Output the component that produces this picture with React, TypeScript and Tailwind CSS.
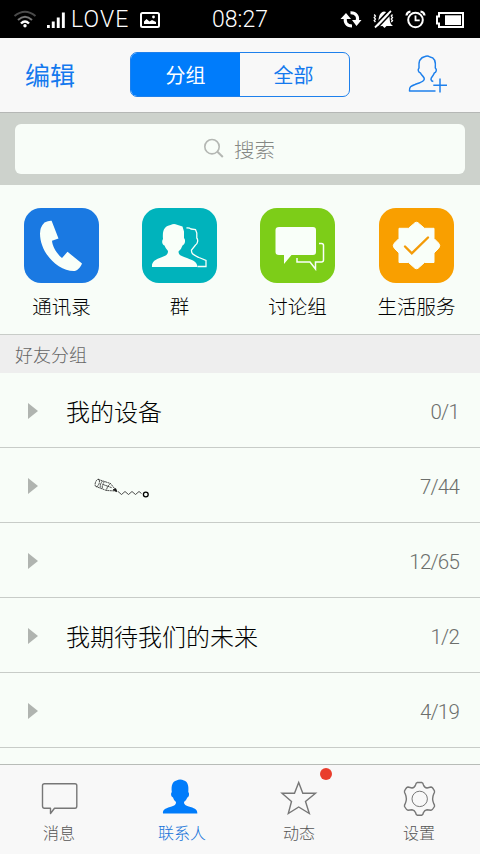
import React from "react";

type IconProps = { className?: string };

const cjk = "font-['Noto_Sans_CJK_SC',sans-serif]";
const latin = "font-['Roboto','Noto_Sans_CJK_SC',sans-serif]";

function StatusLeft() {
  return (
    <svg className="h-[38px] w-[66px]" viewBox="0 0 66 38" fill="none">
      <g strokeWidth="2">
        <path d="M14.500 16Q25 7.500 35.500 16" stroke="#4a4a4a" />
        <path d="M18 20Q25 13.500 32 20" stroke="#777" />
        <path d="M21 23.500Q25 19.500 29 23.500" stroke="#fff" strokeWidth="2.400" />
      </g>
      <circle cx="25" cy="25.700" r="1.700" fill="#fff" />
      <path d="M47 25h2.800v3H47zM51.800 21.500h2.900V28h-2.900zM56.800 17.500h2.900V28h-2.900zM61.900 12.500h2.900V28h-2.900z" fill="#fff" />
    </svg>
  );
}

function PictureIcon() {
  return (
    <svg className="h-[38px] w-[22px]" viewBox="139 0 22 38" fill="none">
      <rect x="141" y="13" width="18" height="14" rx="1.500" stroke="#fff" strokeWidth="2" />
      <path d="M144 24v-2.500l2.500-2.500 3 2.500 2.500-1.500 4 2V24z" fill="#fff" />
      <circle cx="153.500" cy="17" r="1.400" fill="#fff" />
    </svg>
  );
}

function StatusRight() {
  return (
    <svg className="h-[38px] w-[130px]" viewBox="338 0 130 38" fill="none">
      <g stroke="#fff" strokeWidth="3">
        <path d="M352 26C346.500 26 344 22 345.800 17" />
        <path d="M350.500 12.700C356 12.500 359 17 357 21.500" />
      </g>
      <path d="M340.500 19l5.500-6 5 6zM352 20h9.500l-5 6z" fill="#fff" />
      <path d="M375.500 26.500c3.500-3 2.500-6 3.500-9.500.8-3.500 2.500-5 5-5.500 3 .2 5 2 5.500 5.500.5 4 0 6.500 3.500 9h-6.500l-2 2-2-2z" fill="#fff" />
      <path d="M374 26.500l16-17" stroke="#000" strokeWidth="2" />
      <path d="M375 27.500L391 11" stroke="#fff" strokeWidth="1.800" />
      <path d="M377 28.500l16-17" stroke="#000" strokeWidth="1.500" />
      <path d="M374.200 14.500l1.200 1.500-1.200 1.500 1.200 1.500-1.200 1.500 1.200 1.500M392.500 14.500l-1.200 1.500 1.200 1.500-1.200 1.500 1.200 1.500-1.200 1.500" stroke="#fff" strokeWidth="1.300" />
      <circle cx="415.500" cy="20" r="7.300" stroke="#fff" strokeWidth="2" />
      <path d="M415.500 15.500v4.800h4.200" stroke="#fff" strokeWidth="1.800" />
      <path d="M406.500 15.500q.3-3.500 4-4M424.500 15.500q-.3-3.500-4-4" stroke="#fff" strokeWidth="2.200" />
      <path d="M439 13H463v14H439v-3.500h-2v-7h2z" stroke="#fff" strokeWidth="2" />
      <path d="M445 15.300h16v9.700h-16z" fill="#fff" />
    </svg>
  );
}

function AddContactIcon() {
  return (
    <svg className="h-10 w-10" viewBox="408 54 40 40" fill="none" stroke="#1e80ec" strokeWidth="1.500" strokeLinejoin="round">
      <path d="M435.500 91H409.500C409 87 411 86 415 84.500C421 82 424 82 424.300 79C424.400 76.500 421.500 75.800 420.500 73C418.300 72.500 417.500 69.500 419 68C418.300 61 420 57.500 425 56.500Q427.500 55.300 430 57C434.500 57.500 436 61 435.300 68C437.200 69.500 436.200 72.500 434.300 73C433.300 76.500 430.800 77 431 79.500Q431.300 81.200 433.300 81.500" />
      <path d="M440 78.500V92.500M433.300 85.300H447" />
    </svg>
  );
}

function SearchIcon() {
  return (
    <svg className="h-5 w-5" viewBox="204 138 20 20" fill="none" stroke="#b4b7b3" strokeWidth="1.600">
      <circle cx="212" cy="146.700" r="7.200" />
      <path d="M217.200 151.500L222.800 157" strokeWidth="2" />
    </svg>
  );
}

function PhoneArt() {
  return (
    <svg className="size-full" viewBox="24 208 75 75" fill="#f9fff9">
      <path d="M44.500 222.500Q48.500 220.500 51.600 220.800L58.500 238.500L52 240.800C52.500 247 57 254 62 258L67.500 251.800L82 263.500C80.500 267.500 77.500 270.500 74.500 271C58 271.500 40 253 40 233.500Q40 227 44.500 222.500Z" />
    </svg>
  );
}

function GroupArt() {
  return (
    <svg className="size-full" viewBox="142 208 75 75" fill="#f9fff9">
      <path d="M152 267C151.500 262 155 259.500 161 257.500C167 255.500 168 254 168 251Q165.500 248.500 164.500 245.500C162 244.500 161.500 241 163 239C162 229 165.500 226 170.500 225Q174 223.200 177 224.800L182.500 226.500L184 231.500V238C186 240 185 244.500 182.500 245.500Q181.500 249 178.500 251.500C178.500 255 181 256 187 258C193.500 260.500 197.500 262 197.300 267Z" />
      <path d="M186.500 228Q189 227.500 191 229L195.500 229.500L196.800 233V238C198.500 240 197.500 244 195.500 245L191.500 250C191 254 194 255 199 257.500L206 260.500V266.500H197.500" fill="none" stroke="#f9fff9" strokeWidth="1.300" />
    </svg>
  );
}

function ChatArt() {
  return (
    <svg className="size-full" viewBox="260 208 75 75" fill="#f9fff9">
      <path d="M279 227h34q3 0 3 3v22q0 3-3 3h-21.500l-7.500 9v-9H279q-3.500 0-3.500-3v-22q0-3 3.500-3z" />
      <path d="M319 243.500h2.500q2 0 2 2V260q0 2-2 2h-6v7l-5.500-7H297V258" fill="none" stroke="#f9fff9" strokeWidth="1.500" />
    </svg>
  );
}

function ServiceArt() {
  return (
    <svg className="size-full" viewBox="379 208 75 75" fill="none">
      <path d="M413.500 224Q416.500 220.500 419.500 224L424.500 228.300H434V238.500L438.500 243Q441 245.700 438.500 248.500L434 253V262.500H424.500L419.500 267Q416.500 270.500 413.500 267L408.500 262.500H399V253L394.500 248.500Q392 245.700 394.500 243L399 238.500V228.300H408.500Z" fill="#f9fff9" stroke="#f9fff9" strokeLinejoin="round" strokeWidth="1" />
      <path d="M405 246.500L411.800 253.300L428 237.500" stroke="#f39b08" strokeWidth="2.400" strokeLinecap="round" />
    </svg>
  );
}

function MessageIcon({ className }: IconProps) {
  return (
    <svg className={className} viewBox="40 777 40 40" fill="none" stroke="#777" strokeWidth="1.400" strokeLinejoin="round">
      <path d="M44.500 783.700H75Q76.800 783.700 76.800 785.500V806Q76.800 808.300 75 808.300H54.500L50.500 813.500V808.300H44.500Q42.500 808.300 42.500 806V785.500Q42.500 783.700 44.500 783.700Z" />
    </svg>
  );
}

function ContactsIcon({ className }: IconProps) {
  return (
    <svg className={className} viewBox="160 777 40 40" fill="#007cfb">
      <path d="M163 813.500C162.500 810 165 808.500 170 807C175 805.500 176 804.500 176 802Q173.500 800 173 797.500C170.800 796.500 170.500 793.500 171.800 792C171 785.500 172.500 781.500 176.500 780.500Q180 778.700 184 780.500C187.500 781.500 189 785.500 188.300 792C189.800 793.500 189 797 187.300 797.500Q186.300 800.500 184 802C184 804.500 185.500 805.500 190.500 807C195.500 808.500 197.500 810 197.300 813.500Z" />
    </svg>
  );
}

function StarIcon({ className }: IconProps) {
  return (
    <svg className={className} viewBox="280 777 40 40" fill="none" stroke="#777" strokeWidth="1.400">
      <path d="M298.700 782.500L302.800 793.300H315.500L305.500 801.500L309.300 813.500L298.700 807L288.300 813.500L291.500 801.500L282 793.300H294.500Z" />
    </svg>
  );
}

function GearIcon({ className }: IconProps) {
  return (
    <svg className={className} viewBox="400 777 40 40" fill="none" stroke="#777" strokeWidth="1.400" strokeLinejoin="round">
      <path d="M417.300 782.500H421.700Q423 782.800 423.500 785Q424.500 787.800 427 788L431 787Q432.500 787 434.500 791Q434.800 792.500 433.700 794Q431.600 798.700 433.700 803.500Q434.800 804.800 434.500 806.500Q432.500 810 431 810.300L427 809.700Q424.500 809.900 423.500 812.500Q423 815 421.700 815.200H417.300Q416 815 415.500 812.500Q414.500 809.900 412 809.700L408 810.300Q406.500 810 404.500 806.500Q404.200 804.800 405.300 803.500Q407.400 798.700 405.300 794Q404.200 792.500 404.500 791Q406.500 787 408 787L412 788Q414.500 787.800 415.500 785Q416 782.800 417.300 782.500Z" />
      <circle cx="419.700" cy="798.900" r="7.700" strokeWidth="1" />
    </svg>
  );
}

function PencilDoodle() {
  return (
    <svg className="ml-7 mt-1.5 h-6 w-[58px]" viewBox="94 477 58 24" fill="none" stroke="#222" strokeWidth="0.800">
      <path d="M98 479.300L110.500 483.500L116.500 491L106.500 490.500L96.500 486.700" strokeDasharray="2 .5" />
      <ellipse cx="97.300" cy="483" rx="1.900" ry="3.900" transform="rotate(18 97.300 483)" strokeDasharray="2 .5" />
      <path d="M102.500 481Q99.500 484.500 100.500 488M104.500 481.700Q101.500 485 102.500 488.700M103 484.500L112 487.800M110.500 483.500Q107 486 106.500 490.500" strokeDasharray="2 .4" />
      <path d="M113 489.800l4 2-1.300-3.300z" fill="#111" />
      <path d="M118 491.500L121.500 494.500L125 491.500L128.500 494.500L132 491.500L135.500 494.500L139 491.500L141.500 493.500" />
      <circle cx="145.800" cy="494.500" r="2.400" stroke="#000" strokeWidth="1.300" />
    </svg>
  );
}

const shortcuts = [
  { label: "通讯录", color: "bg-[#1a79e2]", Art: PhoneArt },
  { label: "群", color: "bg-[#00b3bc]", Art: GroupArt },
  { label: "讨论组", color: "bg-[#7dcd18]", Art: ChatArt },
  { label: "生活服务", color: "bg-[#f99f00]", Art: ServiceArt },
];

const groups: { name: React.ReactNode; count: string }[] = [
  { name: "我的设备", count: "0/1" },
  { name: <PencilDoodle />, count: "7/44" },
  { name: "", count: "12/65" },
  { name: "我期待我们的未来", count: "1/2" },
  { name: "", count: "4/19" },
];

const tabs = [
  { label: "消息", Icon: MessageIcon, active: false, dot: false },
  { label: "联系人", Icon: ContactsIcon, active: true, dot: false },
  { label: "动态", Icon: StarIcon, active: false, dot: true },
  { label: "设置", Icon: GearIcon, active: false, dot: false },
];

export default function App() {
  return (
    <div className={`flex h-[854px] w-[480px] flex-col overflow-hidden bg-[#f8fdf8] ${cjk}`}>
      <div className={`grid h-[38px] shrink-0 grid-cols-[1fr_auto_1fr] items-center bg-black text-white ${latin}`}>
        <div className="flex items-center">
          <StatusLeft />
          <span className="ml-[5px] w-[60px] pt-0.5 text-[23px] leading-9 font-light tracking-[1.1px]">LOVE</span>
          <span className="ml-2"><PictureIcon /></span>
        </div>
        <span className="pt-0.5 text-[23px] leading-9 font-light">08:27</span>
        <div className="flex justify-end pr-3"><StatusRight /></div>
      </div>

      <header className="flex h-[75px] shrink-0 items-center border-b border-[#b5b7b5] bg-[#f8f8f8] pb-0.5">
        <button className="ml-[25px] w-[105px] text-left text-[25px] leading-9 text-[#1479ee]">编辑</button>
        <div className="flex h-[45px] w-[220px] overflow-hidden rounded-[7px] border-[1.5px] border-[#1e80ec] text-[20px]">
          <button className="w-[109px] bg-[#007cfb] pt-0.5 text-white">分组</button>
          <button className="flex-1 pt-0.5 pr-0.5 text-[#1479ee]">全部</button>
        </div>
        <div className="ml-[58px]"><AddContactIcon /></div>
      </header>

      <div className="h-[72px] shrink-0 bg-[#cdd2cc] px-[15px] pt-[11px]">
        <div className="flex h-[50px] items-center justify-center gap-2.5 rounded-md bg-[#f8fdf8] pr-px pb-0.5 text-[20.5px] font-light text-[#858885]">
          <SearchIcon />
          <span className="pt-0.5">搜索</span>
        </div>
      </div>

      <div className="flex h-[150px] shrink-0 gap-[43px] border-b border-[#c8ccc8] pt-[23px] pl-6">
        {shortcuts.map(({ label, color, Art }) => (
          <div key={label} className="flex w-[75px] flex-col items-center last:ml-px">
            <div className={`size-[75px] overflow-hidden rounded-[17px] ${color}`}><Art /></div>
            <span className="mt-2 text-[19.5px] leading-[30px] font-light whitespace-nowrap text-black">{label}</span>
          </div>
        ))}
      </div>

      <div className="h-[38px] shrink-0 bg-[#eee] pl-[15px] text-[18px] leading-[38px] font-light text-[#666]">好友分组</div>

      <div className="min-h-0 flex-1">
        {groups.map(({ name, count }) => (
          <div key={count} className="flex h-[75px] items-center border-b border-[#c8ccc8] pt-0.5 pr-[21px] pl-7">
            <svg className="h-4 w-2.5 shrink-0" viewBox="0 0 10 16" fill="#b0b4b0"><path d="M0 0l10 8-10 8z" /></svg>
            <div className="ml-7 flex-1 text-[24px] leading-9 font-light text-black">{name}</div>
            <span className={`mt-0.5 text-[20.5px] font-light tracking-[-0.8px] text-[#6c6f6c] ${latin}`}>{count}</span>
          </div>
        ))}
      </div>

      <nav className="grid h-[90px] shrink-0 grid-cols-4 border-t border-[#b8bcb8] bg-[#f8f8f8]">
        {tabs.map(({ label, Icon, active, dot }) => (
          <button key={label} className={`relative flex flex-col items-center pt-3 text-[16px] leading-6 font-light ${active ? "text-[#1673d8]" : "text-[#555]"}`}>
            <Icon className="size-10" />
            <span className={`mt-[3px] ${active ? "pl-1" : "pr-0.5"}`}>{label}</span>
            {dot && <i className="absolute top-[3px] left-20 size-3 rounded-full bg-[#e93d2c]" />}
          </button>
        ))}
      </nav>
    </div>
  );
}
